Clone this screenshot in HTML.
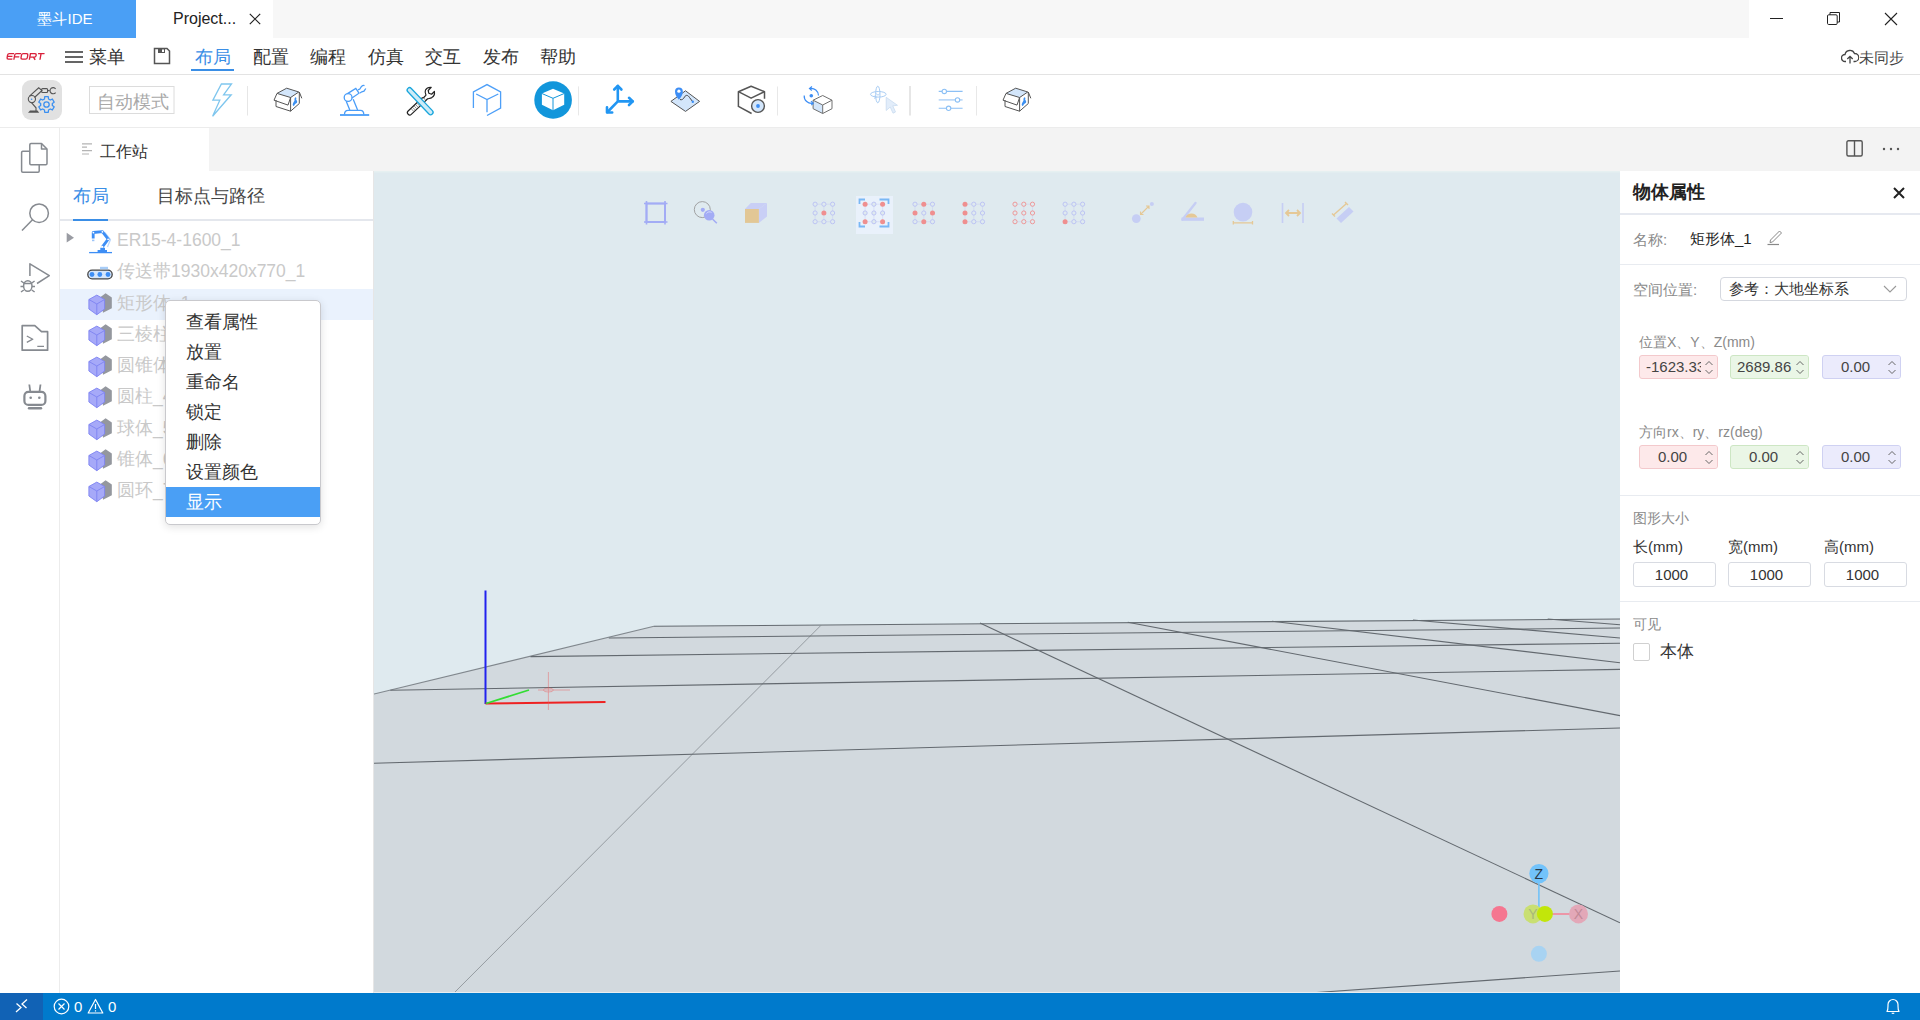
<!DOCTYPE html>
<html><head><meta charset="utf-8">
<style>
*{box-sizing:border-box;margin:0;padding:0}
html,body{width:1920px;height:1020px;overflow:hidden;background:#fff;font-family:"Liberation Sans",sans-serif;color:#333}
.abs{position:absolute}
#title{left:0;top:0;width:1920px;height:38px;background:#f7f7f7}
#tab1{left:0;top:0;width:136px;height:38px;background:#4a9ff5;color:#fff;font-size:15px;line-height:38px;text-align:center}
#tab2{left:136px;top:0;width:137px;height:38px;background:#fff;color:#222;font-size:15px;line-height:38px}
#winc{left:1749px;top:0;width:171px;height:38px;background:#fff}
#menubar{left:0;top:38px;width:1920px;height:37px;background:#fff;border-bottom:1px solid #e3e3e3}
.mi{position:absolute;top:1px;font-size:18px;line-height:37px;color:#333}
#toolbar{left:0;top:75px;width:1920px;height:53px;background:#fff;border-bottom:1px solid #ececec}
#act{left:0;top:128px;width:60px;height:865px;background:#fff;border-right:1px solid #ececec}
#tabhdr{left:60px;top:128px;width:1860px;height:43px;background:#f3f3f3}
#wtab{left:60px;top:128px;width:149px;height:43px;background:#fff}
#lpanel{left:60px;top:171px;width:314px;height:822px;background:#fff}
#view{left:374px;top:171px;width:1246px;height:822px;background:#dfeaef;overflow:hidden}
#rpanel{left:1620px;top:171px;width:300px;height:822px;background:#fff}
#status{left:0;top:993px;width:1920px;height:27px;background:#007acc}
.tree{font-size:17.5px;line-height:22px;color:#c9c9c9;white-space:nowrap}
.ci{position:absolute;left:20px;font-size:18px;line-height:22px;color:#333}
#status svg{position:absolute}
.rl{position:absolute;font-size:15px;line-height:20px;color:#8a8a8a;white-space:nowrap}
.sz{position:absolute;top:391px;width:83px;height:25px;border:1px solid #d8dbe2;border-radius:3px;font-size:15px;line-height:23px;text-align:center;color:#333;padding-right:6px}
</style></head><body>
<div id="title" class="abs"></div>
<div id="tab1" class="abs" style="padding-right:6px">墨斗IDE</div>
<div id="tab2" class="abs"><span style="position:absolute;left:37px;font-size:16px">Project...</span><svg style="position:absolute;left:113px;top:13px" width="12" height="12" viewBox="0 0 12 12"><path d="M0.8 0.8L11.2 11.2M11.2 0.8L0.8 11.2" stroke="#222" stroke-width="1.2"/></svg></div>
<div id="winc" class="abs">
<div class="abs" style="left:21px;top:18px;width:13px;height:1px;background:#222"></div>
<svg class="abs" style="left:77px;top:11px" width="15" height="15" viewBox="0 0 15 15"><rect x="1.5" y="3.8" width="9.7" height="9.7" rx="1.2" fill="none" stroke="#222" stroke-width="1"/><path d="M4 3.8V1.5H13.5V11H11.2" fill="none" stroke="#222" stroke-width="1"/></svg>
<svg class="abs" style="left:135px;top:12px" width="14" height="14" viewBox="0 0 14 14"><path d="M1 1L13 13M13 1L1 13" stroke="#222" stroke-width="1.1"/></svg>
</div>
<div id="menubar" class="abs">
<svg class="abs" style="left:0;top:0" width="50" height="30" viewBox="0 38 50 30"><g transform="translate(9.9,0) skewX(-10)" fill="none" stroke="#d9203a" stroke-width="1.35" stroke-linecap="butt">
<path d="M13.6 53.65H8.9C8 53.65 7.4 54.2 7.4 55.1V57.7C7.4 58.6 8 59.15 8.9 59.15H12.9M7.4 56.4H12.5"/>
<path d="M20.6 53.65H16C15.1 53.65 14.5 54.2 14.5 55.1V59.8M14.5 56.9H19.4"/>
<path d="M22.8 53.65H26.1C27 53.65 27.6 54.2 27.6 55.1V57.7C27.6 58.6 27 59.15 26.1 59.15H22.8C21.9 59.15 21.3 58.6 21.3 57.7V55.1C21.3 54.2 21.9 53.65 22.8 53.65Z"/>
<path d="M30 59.8V53.65H34.5C35.4 53.65 36 54.2 36 55.1V55.7C36 56.6 35.4 57.1 34.5 57.1H30.7M33.7 57.1L35.8 59.8"/>
<path d="M37.6 53.65H44.1M40.6 53.65V59.8"/>
</g></svg>
<svg class="abs" style="left:64px;top:12px" width="20" height="14"><path d="M1 2H19M1 7H19M1 12H19" stroke="#333" stroke-width="1.6"/></svg>
<span class="mi" style="left:89px">菜单</span>
<svg class="abs" style="left:153px;top:9px" width="18" height="18" viewBox="0 0 18 18"><path d="M2 1.5H14L16.5 4V16.5H1.5V1.5Z" fill="none" stroke="#555" stroke-width="1.5"/><rect x="5" y="2" width="7" height="4" fill="#555"/><rect x="9" y="2.5" width="2" height="2.5" fill="#fff"/></svg>
<span class="mi" style="left:195px;color:#3a8ee6">布局</span>
<div class="abs" style="left:191px;top:31px;width:43px;height:2px;background:#3a8ee6"></div>
<span class="mi" style="left:253px">配置</span>
<span class="mi" style="left:310px">编程</span>
<span class="mi" style="left:368px">仿真</span>
<span class="mi" style="left:425px">交互</span>
<span class="mi" style="left:483px">发布</span>
<span class="mi" style="left:540px">帮助</span>
<svg class="abs" style="left:1841px;top:11px" width="18" height="16" viewBox="0 0 18 16"><path d="M5 12.5H4A3.5 3.5 0 0 1 4 5.5A5 5 0 0 1 13.5 4.5A3.5 3.5 0 0 1 14 12.5H12.5" fill="none" stroke="#444" stroke-width="1.3"/><path d="M9 14.5V7.5M6.3 10L9 7.3L11.7 10" fill="none" stroke="#444" stroke-width="1.3"/></svg>
<span class="mi" style="left:1859px;font-size:15px;color:#444">未同步</span>
</div>
<div id="toolbar" class="abs"></div>
<svg class="abs" style="left:0;top:0" width="1100" height="128" viewBox="0 0 1100 128">
<rect x="22" y="80" width="40" height="40" rx="9" fill="#e1e1e1"/>
<g fill="none" stroke="#555" stroke-width="1.1">
<circle cx="31.9" cy="99.1" r="3.6"/><circle cx="31.6" cy="99.3" r="0.8" fill="#3b8ff0" stroke="none"/>
<path d="M29.5 96.2L38.7 87.8L42 90.5L34.5 97.5"/>
<rect x="41.6" y="88.6" width="6" height="3.9" rx="1"/>
<path d="M55.6 88.8A3.1 3.1 0 1 0 55.6 92.6"/>
<path d="M47.6 90.6H49.7"/>
<path d="M31.5 102.6L36 107.8V111"/>
</g>
<path d="M28 112.7L30 110.6H37.5L39.2 112.7Z" fill="#555"/>
<g fill="none" stroke="#3b8ff0" stroke-width="1.3">
<path d="M44.70 96.71L48.30 96.71L48.52 98.96L50.29 99.98L52.35 99.04L54.15 102.16L52.31 103.48L52.31 105.52L54.15 106.84L52.35 109.96L50.29 109.02L48.52 110.04L48.30 112.29L44.70 112.29L44.48 110.04L42.71 109.02L40.65 109.96L38.85 106.84L40.69 105.52L40.69 103.48L38.85 102.16L40.65 99.04L42.71 99.98L44.48 98.96Z" stroke-linejoin="round"/>
<circle cx="46.5" cy="104.5" r="2.7"/>
</g>
<rect x="89.5" y="86.5" width="84.5" height="27" fill="none" stroke="#dcdcdc" stroke-width="1"/>
<text x="97.2" y="108.3" font-size="17.9" fill="#a9a9a9" font-family="Liberation Sans, sans-serif">自动模式</text>
<path d="M221.4 84H231.5L223.6 94.8H231.2L212.6 116.2L219.8 100.2H212.9Z" fill="none" stroke="#7fc6ee" stroke-width="1.3" stroke-linejoin="miter"/>
<rect x="247" y="86" width="1" height="29.5" fill="#e6e6e6"/>
<g id="box1">
<path d="M277 93.4L286.7 88.2L298.8 92L290.6 97.5Z" fill="#d3e6fb"/>
<path d="M277 93.4L286.7 88.2L298.8 92L290.6 97.5ZM277 93.4L274 100.2L288 105.1L290.6 97.5M276 100V106.5L290.6 111.2V97.5M290.6 111.2L299.3 103.5V92L301.8 98.3" fill="none" stroke="#555" stroke-width="1" stroke-linejoin="round"/>
<path d="M295.5 97.3C296.6 97.5 296.5 99 296.1 100C297.4 100.3 297.5 102.5 296.6 103.1C295.7 103.9 294.7 104.3 294.1 105.8C293.1 106.3 292.5 105.3 292.8 104C293.2 102.5 294.2 101.6 294.5 100.6C294.4 99.2 294.5 97.6 295.5 97.3Z" fill="#3b8ff0"/>
</g>
<g fill="none" stroke="#4a9df8" stroke-width="1.3">
<path d="M340 115H369.2" stroke-width="1.8"/>
<path d="M344.5 114.5C344.5 112 345.5 110.3 348 110.3H360.5C363 110.3 363.8 112 363.8 114.5"/>
<path d="M346.2 101.2L349.8 110M353.2 99.3L357.6 110"/>
<circle cx="348.1" cy="97.5" r="3.9"/>
<path d="M347.5 93.6L355.8 88.4L359 93.2L352 98"/>
<path d="M358 89.8L359.8 89L361.5 86.5C362.5 85.5 363.5 85.2 364.5 85.6M360 93L361.8 91.8L364 91.2L365.8 88.5"/>
</g>
<g transform="rotate(-43 416.5 106.3)"><rect x="405" y="104" width="23" height="4.6" rx="2.2" fill="#fff" stroke="#222" stroke-width="1.2"/><path d="M411 104.6V108M413 104.6V108M415 104.6V108M417 104.6V108M419 104.6V108" stroke="#555" stroke-width="0.6"/></g>
<path d="M423.8 97.5L426 95.2C425.3 93.5 424.6 91.6 425.5 90C426.6 88 428.8 87.2 431.2 87.4L428.2 90.5L428.8 93.2L431.6 94.2L434.4 91.5C434.8 94 434 96.3 431.8 97.6C430.3 98.4 428.8 98.4 427.6 98.8L425.8 100.5" fill="#fff" stroke="#222" stroke-width="1.2" stroke-linejoin="round"/>
<g transform="rotate(46.5 420.1 101.2)"><rect x="402.4" y="98.8" width="35.4" height="4.8" rx="2.4" fill="#cdebf7" stroke="#1aa6dc" stroke-width="1.3"/></g>
<g fill="none" stroke="#4d9ff8" stroke-width="1.3">
<path d="M473.4 108V92L487 84.6L500.6 92V108L487 115.5"/>
<path d="M476.2 94L487 99.6L498.3 94M487 99.6V112.2"/>
</g>
<circle cx="553.1" cy="100" r="18.8" fill="#1296db"/>
<path d="M553 88.8L564.2 93.5V104.7L553 110.3L541.9 104.7V93.5Z" fill="#fff"/>
<path d="M541.9 93.5L553 98.3L564.2 93.5M553 98.3V110.3" fill="none" stroke="#1296db" stroke-width="1"/>
<rect x="578" y="86.4" width="1" height="29" fill="#e8e8e8"/>
<g fill="none" stroke="#2196f3" stroke-width="2.6" stroke-linecap="round" stroke-linejoin="round">
<path d="M617.8 101.4V86M617.8 101.4H632.5M617.8 101.4L607.5 112"/>
<path d="M614.2 89.5L617.8 85.8L621.4 89.5M629 97.8L632.8 101.4L629 105M607 107.2L607 112.5L612.2 112.5"/>
</g>
<path d="M670.9 101.4L685.5 90.8L699.6 101.4L685.5 111.4Z" fill="#d3e6fb" stroke="#555" stroke-width="1"/>
<path d="M680 99.6C682 100.2 683.5 99 684.5 97C686 94.5 688 95 689.5 97.5L692.8 101.8" fill="none" stroke="#444" stroke-width="1"/>
<circle cx="692.8" cy="101.8" r="1.2" fill="#3d8ef5"/>
<path d="M678.9 99.8C676.2 96.5 675 94.3 675 91.3A3.9 3.9 0 0 1 682.8 91.3C682.8 94.3 681.6 96.5 678.9 99.8Z" fill="#3d8ef5"/>
<circle cx="678.9" cy="91.2" r="1.6" fill="#fff"/>
<g fill="none" stroke="#555" stroke-width="1.5" stroke-linejoin="round">
<path d="M751.6 113.5L738.4 106.4V91.7L751.1 86.2L764.5 91.7V98.7"/>
<path d="M738.4 91.7L751.1 98.2L764.5 91.7"/>
</g>
<circle cx="758" cy="106" r="6.4" fill="#d3e6fb" stroke="#555" stroke-width="1.4"/>
<circle cx="758" cy="106" r="1.9" fill="#3d8ef5"/>
<rect x="777" y="86.5" width="1" height="29" fill="#e8e8e8"/>
<path d="M813.1 100.2L822.7 105V113.5L813.1 108.7Z" fill="#d3e6fb"/>
<g fill="none" stroke="#707070" stroke-width="1">
<path d="M813.1 100.2L822.7 95.5L832 100.2L822.7 105ZM813.1 100.2V108.7L822.7 113.5L832 108.7V100.2M822.7 105V113.5"/>
</g>
<circle cx="811.3" cy="95.7" r="1.8" fill="#3d8ef5"/>
<g fill="none" stroke="#3d8ef5" stroke-width="1.2">
<path d="M810 88.5A7.3 7.3 0 0 1 818.5 95.5"/>
<path d="M804.2 95.5A7.3 7.3 0 0 0 813 103.2"/>
<path d="M812 86.5L809.5 88.5L811.8 90.5M811 101.2L813.2 103.2L811.3 105.2"/>
</g>
<g fill="none" stroke="#a9cdf4" stroke-width="1">
<ellipse cx="878.3" cy="94.3" rx="7.8" ry="2.8"/>
<ellipse cx="877.8" cy="94.5" rx="2.2" ry="8.3"/><path d="M876 93.6L878 95.2L880 93.6M874 96L876.5 97.2L874 98.4" stroke-width="0.9"/>
</g>
<path d="M886.2 97.3L897.5 105.3L892.8 105.8L895.5 112L893 113.2L890.2 107L886.2 110.5Z" fill="#e2edfa" stroke="#c9dcf0" stroke-width="0.8"/>
<rect x="909" y="86" width="2" height="29.5" fill="#e6e6e6"/>
<g fill="none" stroke="#8cc0f5" stroke-width="1.1">
<path d="M938.7 91.4H962.6M938.7 108.3H962.6"/><path d="M938.7 99.9H962.6" stroke="#b3d4f7" stroke-width="1.5"/>
</g>
<g fill="#fff" stroke="#8cc0f5" stroke-width="1.1">
<circle cx="944.3" cy="91.4" r="2.2"/><circle cx="957.5" cy="99.9" r="2.2"/><circle cx="948.6" cy="108.3" r="2.2"/>
</g>
<rect x="976" y="86" width="1" height="29.5" fill="#e8e8e8"/>
<use href="#box1" x="729" y="0"/>
</svg>
<div id="act" class="abs"></div>
<svg class="abs" style="left:0;top:128px" width="59" height="300" viewBox="0 128 59 300">
<g fill="none" stroke="#868a90" stroke-width="1.5" stroke-linejoin="round">
<path d="M29.8 151.2H22.8Q21.6 151.2 21.6 152.4V171Q21.6 172.2 22.8 172.2H38Q39.2 172.2 39.2 171V164.7"/>
<path d="M31 143.5H41.5L47 149V163.5Q47 164.7 45.8 164.7H31Q29.8 164.7 29.8 163.5V144.7Q29.8 143.5 31 143.5Z"/>
<path d="M41.5 143.5V149H47"/>
<circle cx="39.1" cy="213.2" r="9.3"/>
<path d="M32.5 219.8L22 230.5"/>
<path d="M29.9 276V263.8L49.3 275.7L37 283.5"/>
<ellipse cx="27.8" cy="286" rx="4.2" ry="5.3"/>
<path d="M23.6 283.5H32M21 281L23.8 283M34.6 281L31.8 283M20.5 286.5H23.6M32 286.5H35M21 292L23.8 290M34.6 292L31.8 290"/>
<path d="M22.2 350.2V325.7H34.8L41.5 331.7H47.6V350.2Z" stroke-width="1.7"/>
<path d="M26.8 336L32.8 339.2L26.8 342.3M37.3 346.3H44" stroke-width="1.3"/>
</g>
<g fill="none" stroke="#868a90">
<rect x="24.4" y="391.9" width="21" height="13" rx="4" stroke-width="2.2"/>
<path d="M30.2 391L29.3 384.5M39.6 391L40.5 384.5" stroke-width="1.8"/>
<path d="M29 408.2H41" stroke-width="2.4" stroke-linecap="round"/>
</g>
<g fill="#868a90"><circle cx="30.7" cy="397.8" r="1.3"/><circle cx="39.3" cy="397.8" r="1.3"/></g>
</svg>
<div id="tabhdr" class="abs"></div>
<div id="wtab" class="abs">
<svg class="abs" style="left:21px;top:15px" width="12" height="12" viewBox="0 0 12 12"><path d="M1 0.8H11M1 4.2H6M1 7.6H11M1 11H8" stroke="#b4b4b4" stroke-width="1.2"/></svg>
<span class="abs" style="left:40px;top:14px;font-size:16px;line-height:20px;color:#333">工作站</span>
</div>
<svg class="abs" style="left:1844px;top:140px" width="20" height="18" viewBox="0 0 20 18"><rect x="2.9" y="0.8" width="15.3" height="15.2" rx="1.5" fill="none" stroke="#555" stroke-width="1.4"/><path d="M10.5 0.8V16" stroke="#555" stroke-width="1.4"/></svg>
<svg class="abs" style="left:1882px;top:147px" width="18" height="4"><circle cx="2" cy="2" r="1.2" fill="#555"/><circle cx="9" cy="2" r="1.2" fill="#555"/><circle cx="16" cy="2" r="1.2" fill="#555"/></svg>
<div id="lpanel" class="abs">
<span class="abs" style="left:13px;top:14px;font-size:18px;line-height:22px;color:#3a8ee6">布局</span>
<span class="abs" style="left:97px;top:14px;font-size:18px;line-height:22px;color:#444">目标点与路径</span>
<div class="abs" style="left:0;top:48px;width:313px;height:2px;background:#e4e7ed"></div>
<div class="abs" style="left:13px;top:48px;width:35px;height:2px;background:#3a8ee6"></div>
</div>
<div class="abs" style="left:60px;top:289px;width:313px;height:31px;background:#eaf2fd"></div>
<svg class="abs" style="left:66px;top:232px" width="9" height="11"><path d="M0.7 0.8L8 5.7L0.7 10.6Z" fill="#9a9ca3"/></svg>
<svg class="abs" style="left:85px;top:226px" width="30" height="30" viewBox="85 226 30 30">
<path d="M105 232.5L110.5 239.5L107.5 247" fill="none" stroke="#b9d6fb" stroke-width="1.2"/>
<path d="M89.1 252.6H112" stroke="#3d8ef5" stroke-width="1.3"/>
<path d="M97.6 252.6V250.1H100.3V247.8H105V250.1H107V252.6Z" fill="#3d8ef5"/>
<path d="M102.4 246.8L108.2 239.2L102.4 231.6L93.2 232.5V238.6" fill="none" stroke="#3d8ef5" stroke-width="2.8" stroke-linejoin="round"/>
<rect x="92" y="239.6" width="2.4" height="1.6" fill="#9cc4f8"/>
<g fill="#fff"><circle cx="93.4" cy="232.6" r="0.9"/><circle cx="102.4" cy="231.8" r="0.9"/><circle cx="108.1" cy="239.3" r="0.9"/><circle cx="102.4" cy="246.6" r="0.9"/></g>
</svg>
<span class="abs tree" style="left:117px;top:229px">ER15-4-1600_1</span>
<svg class="abs" style="left:87px;top:265px" width="26" height="15" viewBox="0 0 26 15"><rect x="0.8" y="5.2" width="24.4" height="8.6" rx="4.3" fill="#d5e6fb" stroke="#444" stroke-width="1.3"/><circle cx="5" cy="9.5" r="2.4" fill="#3d8ef5"/><circle cx="12.8" cy="9.5" r="2.4" fill="#3d8ef5"/><circle cx="21" cy="9.5" r="2.4" fill="#3d8ef5"/><rect x="13" y="1.8" width="8" height="2.5" fill="#a8cdf7"/></svg>
<span class="abs tree" style="left:117px;top:260px">传送带1930x420x770_1</span>
<svg class="abs" style="left:88px;top:292px" width="26" height="24" viewBox="0 0 26 24"><path d="M12.2 5.2L17.6 1.2L23.8 5.5V16.3L15 20.7Z" fill="#94979e"/><path d="M8.8 3.1L16.6 7.5V17L8.8 22.7L0.9 17V7.5Z" fill="#a6a9f8" stroke="#7e83f2" stroke-width="0.9"/><path d="M0.9 7.5L8.8 12L16.6 7.5M8.8 12V22.7" fill="none" stroke="#7e83f2" stroke-width="0.9"/></svg>
<span class="abs tree" style="left:117px;top:292px">矩形体_1</span>
<svg class="abs" style="left:88px;top:323px" width="26" height="24" viewBox="0 0 26 24"><path d="M12.2 5.2L17.6 1.2L23.8 5.5V16.3L15 20.7Z" fill="#94979e"/><path d="M8.8 3.1L16.6 7.5V17L8.8 22.7L0.9 17V7.5Z" fill="#a6a9f8" stroke="#7e83f2" stroke-width="0.9"/><path d="M0.9 7.5L8.8 12L16.6 7.5M8.8 12V22.7" fill="none" stroke="#7e83f2" stroke-width="0.9"/></svg><span class="abs tree" style="left:117px;top:323px">三棱柱_2</span>
<svg class="abs" style="left:88px;top:354px" width="26" height="24" viewBox="0 0 26 24"><path d="M12.2 5.2L17.6 1.2L23.8 5.5V16.3L15 20.7Z" fill="#94979e"/><path d="M8.8 3.1L16.6 7.5V17L8.8 22.7L0.9 17V7.5Z" fill="#a6a9f8" stroke="#7e83f2" stroke-width="0.9"/><path d="M0.9 7.5L8.8 12L16.6 7.5M8.8 12V22.7" fill="none" stroke="#7e83f2" stroke-width="0.9"/></svg><span class="abs tree" style="left:117px;top:354px">圆锥体_3</span>
<svg class="abs" style="left:88px;top:385px" width="26" height="24" viewBox="0 0 26 24"><path d="M12.2 5.2L17.6 1.2L23.8 5.5V16.3L15 20.7Z" fill="#94979e"/><path d="M8.8 3.1L16.6 7.5V17L8.8 22.7L0.9 17V7.5Z" fill="#a6a9f8" stroke="#7e83f2" stroke-width="0.9"/><path d="M0.9 7.5L8.8 12L16.6 7.5M8.8 12V22.7" fill="none" stroke="#7e83f2" stroke-width="0.9"/></svg><span class="abs tree" style="left:117px;top:385px">圆柱_4</span>
<svg class="abs" style="left:88px;top:417px" width="26" height="24" viewBox="0 0 26 24"><path d="M12.2 5.2L17.6 1.2L23.8 5.5V16.3L15 20.7Z" fill="#94979e"/><path d="M8.8 3.1L16.6 7.5V17L8.8 22.7L0.9 17V7.5Z" fill="#a6a9f8" stroke="#7e83f2" stroke-width="0.9"/><path d="M0.9 7.5L8.8 12L16.6 7.5M8.8 12V22.7" fill="none" stroke="#7e83f2" stroke-width="0.9"/></svg><span class="abs tree" style="left:117px;top:417px">球体_5</span>
<svg class="abs" style="left:88px;top:448px" width="26" height="24" viewBox="0 0 26 24"><path d="M12.2 5.2L17.6 1.2L23.8 5.5V16.3L15 20.7Z" fill="#94979e"/><path d="M8.8 3.1L16.6 7.5V17L8.8 22.7L0.9 17V7.5Z" fill="#a6a9f8" stroke="#7e83f2" stroke-width="0.9"/><path d="M0.9 7.5L8.8 12L16.6 7.5M8.8 12V22.7" fill="none" stroke="#7e83f2" stroke-width="0.9"/></svg><span class="abs tree" style="left:117px;top:448px">锥体_6</span>
<svg class="abs" style="left:88px;top:479px" width="26" height="24" viewBox="0 0 26 24"><path d="M12.2 5.2L17.6 1.2L23.8 5.5V16.3L15 20.7Z" fill="#94979e"/><path d="M8.8 3.1L16.6 7.5V17L8.8 22.7L0.9 17V7.5Z" fill="#a6a9f8" stroke="#7e83f2" stroke-width="0.9"/><path d="M0.9 7.5L8.8 12L16.6 7.5M8.8 12V22.7" fill="none" stroke="#7e83f2" stroke-width="0.9"/></svg><span class="abs tree" style="left:117px;top:479px">圆环_7</span>

<div class="abs" id="ctx" style="left:165px;top:300px;width:156px;height:225px;background:#fff;border:1px solid #c9c9cd;border-radius:5px;box-shadow:0 2px 8px rgba(0,0,0,0.12)">
<div class="abs" style="left:0;top:186px;width:154px;height:30px;background:#4a9ff5"></div>
<div class="ci" style="top:10px">查看属性</div>
<div class="ci" style="top:40px">放置</div>
<div class="ci" style="top:70px">重命名</div>
<div class="ci" style="top:100px">锁定</div>
<div class="ci" style="top:130px">删除</div>
<div class="ci" style="top:160px">设置颜色</div>
<div class="ci" style="top:190px;color:#fff">显示</div>
</div>
<div id="view" class="abs"></div>
<svg class="abs" style="left:374px;top:171px" width="1246" height="822" viewBox="374 171 1246 822">
<rect x="374" y="171" width="1246" height="822" fill="#dfeaef"/><rect x="374" y="171" width="1246" height="1.5" fill="#e6f0f1"/>
<path d="M374 694L654 626.3L1620 619V993H374Z" fill="#d2d9de"/>
<g stroke="#50565c" stroke-width="1.1" fill="none" opacity="0.85">
<path d="M374 694L654 626.3" opacity="0.75"/><path d="M654 626.3L1620 619"/>
<path d="M608.8 638L1620 628"/>
<path d="M530.5 656.6L1620 643.2"/>
<path d="M390.3 690.2L1620 669.4"/>
<path d="M374 763.2L1620 728"/>
<path d="M1309.7 993L1620 971"/>
<path d="M820.7 625.6L454 993" stroke-width="0.9" opacity="0.6"/>
<path d="M980 623L1620 922.8"/>
<path d="M1127.8 622.3L1620 715.6"/>
<path d="M1272 621.3L1620 662.8"/>
<path d="M1413 620L1620 638"/>
<path d="M1547.7 619L1620 624.8"/>
</g>
<path d="M485.5 590.5V704" stroke="#2222ee" stroke-width="2"/>
<path d="M485.5 703.5L605.5 702" stroke="#ee2222" stroke-width="2"/>
<path d="M486 703.5L529 690" stroke="#33dd33" stroke-width="1.8"/>
<g stroke="#ee5555" stroke-width="0.7" opacity="0.6"><path d="M548.4 672V710M538 690H570"/><ellipse cx="548.4" cy="690" rx="5" ry="2" fill="none"/></g>
<g stroke="#a3acf5" stroke-width="2" fill="none"><rect x="646.5" y="203.5" width="18.5" height="18.5"/><path d="M646.5 201V224.5M665 201V224.5M644 203.5H667.5M644 222H667.5" stroke-width="1.6"/></g><circle cx="702.3" cy="209.6" r="8" fill="none" stroke="#9a9a9a" stroke-width="0.9"/><circle cx="702.8" cy="209.8" r="2.1" fill="#a3acf5"/><circle cx="709.2" cy="215.3" r="5.3" fill="#a3acf5"/><path d="M712.5 219L716.8 223.2" stroke="#a3acf5" stroke-width="1.6"/><path d="M706.5 213.5A3.5 3.5 0 0 1 711.5 212.5" stroke="#dfe4fb" stroke-width="0.8" fill="none"/><path d="M745 209L750.8 203H767L758.9 209Z" fill="#c9cff6"/><path d="M758.9 209L767 203V216.4L758.9 222.9Z" fill="#c9cff6"/><rect x="745" y="209" width="13.9" height="13.9" fill="#e2c795"/><g stroke="#b9c0f4" stroke-width="0.7" fill="none" opacity="0.45"><path d="M815.1 204.2V221.7"/><path d="M823.9 204.2V221.7"/><path d="M832.6 204.2V221.7"/><path d="M815.1 204.2H832.6M815.1 221.7H832.6"/></g><circle cx="815.1" cy="204.2" r="2.1" fill="#dfeaef" stroke="#b9c0f4" stroke-width="0.9"/><circle cx="823.9" cy="204.2" r="2.1" fill="#dfeaef" stroke="#b9c0f4" stroke-width="0.9"/><circle cx="832.6" cy="204.2" r="2.1" fill="#dfeaef" stroke="#b9c0f4" stroke-width="0.9"/><circle cx="815.1" cy="213.0" r="2.1" fill="#dfeaef" stroke="#b9c0f4" stroke-width="0.9"/><circle cx="823.9" cy="213.0" r="2.5" fill="#ef8f8f"/><circle cx="832.6" cy="213.0" r="2.1" fill="#dfeaef" stroke="#b9c0f4" stroke-width="0.9"/><circle cx="815.1" cy="221.7" r="2.1" fill="#dfeaef" stroke="#b9c0f4" stroke-width="0.9"/><circle cx="823.9" cy="221.7" r="2.1" fill="#dfeaef" stroke="#b9c0f4" stroke-width="0.9"/><circle cx="832.6" cy="221.7" r="2.1" fill="#dfeaef" stroke="#b9c0f4" stroke-width="0.9"/><rect x="856" y="196" width="37" height="38" fill="#e9f1fb"/><g stroke="#7ab8f5" stroke-width="1.8" fill="none"><path d="M859.5 204V199.5H865M879.5 199.5H888.5V204M859.5 222V226.5H865M879.5 226.5H888.5V222"/></g><g stroke="#b9c0f4" stroke-width="0.7" fill="none" opacity="0.45"><path d="M865.1 204.2V221.7"/><path d="M873.9 204.2V221.7"/><path d="M882.6 204.2V221.7"/><path d="M865.1 204.2H882.6M865.1 221.7H882.6"/></g><circle cx="865.1" cy="204.2" r="2.5" fill="#ef8f8f"/><circle cx="873.9" cy="204.2" r="2.1" fill="#dfeaef" stroke="#b9c0f4" stroke-width="0.9"/><circle cx="882.6" cy="204.2" r="2.5" fill="#ef8f8f"/><circle cx="865.1" cy="213.0" r="2.1" fill="#dfeaef" stroke="#b9c0f4" stroke-width="0.9"/><circle cx="873.9" cy="213.0" r="2.1" fill="#dfeaef" stroke="#b9c0f4" stroke-width="0.9"/><circle cx="882.6" cy="213.0" r="2.1" fill="#dfeaef" stroke="#b9c0f4" stroke-width="0.9"/><circle cx="865.1" cy="221.7" r="2.5" fill="#ef8f8f"/><circle cx="873.9" cy="221.7" r="2.1" fill="#dfeaef" stroke="#b9c0f4" stroke-width="0.9"/><circle cx="882.6" cy="221.7" r="2.5" fill="#ef8f8f"/><g stroke="#b9c0f4" stroke-width="0.7" fill="none" opacity="0.45"><path d="M915.0 204.2V221.7"/><path d="M923.8 204.2V221.7"/><path d="M932.5 204.2V221.7"/><path d="M915.0 204.2H932.5M915.0 221.7H932.5"/></g><circle cx="915.0" cy="204.2" r="2.1" fill="#dfeaef" stroke="#b9c0f4" stroke-width="0.9"/><circle cx="923.8" cy="204.2" r="2.5" fill="#ef8f8f"/><circle cx="932.5" cy="204.2" r="2.1" fill="#dfeaef" stroke="#b9c0f4" stroke-width="0.9"/><circle cx="915.0" cy="213.0" r="2.5" fill="#ef8f8f"/><circle cx="923.8" cy="213.0" r="2.1" fill="#dfeaef" stroke="#b9c0f4" stroke-width="0.9"/><circle cx="932.5" cy="213.0" r="2.5" fill="#ef8f8f"/><circle cx="915.0" cy="221.7" r="2.1" fill="#dfeaef" stroke="#b9c0f4" stroke-width="0.9"/><circle cx="923.8" cy="221.7" r="2.5" fill="#ef8f8f"/><circle cx="932.5" cy="221.7" r="2.1" fill="#dfeaef" stroke="#b9c0f4" stroke-width="0.9"/><g stroke="#b9c0f4" stroke-width="0.7" fill="none" opacity="0.45"><path d="M965.0 204.2V221.7"/><path d="M973.8 204.2V221.7"/><path d="M982.5 204.2V221.7"/><path d="M965.0 204.2H982.5M965.0 221.7H982.5"/></g><circle cx="965.0" cy="204.2" r="2.5" fill="#ef8f8f"/><circle cx="973.8" cy="204.2" r="2.1" fill="#dfeaef" stroke="#b9c0f4" stroke-width="0.9"/><circle cx="982.5" cy="204.2" r="2.1" fill="#dfeaef" stroke="#b9c0f4" stroke-width="0.9"/><circle cx="965.0" cy="213.0" r="2.5" fill="#ef8f8f"/><circle cx="973.8" cy="213.0" r="2.1" fill="#dfeaef" stroke="#b9c0f4" stroke-width="0.9"/><circle cx="982.5" cy="213.0" r="2.1" fill="#dfeaef" stroke="#b9c0f4" stroke-width="0.9"/><circle cx="965.0" cy="221.7" r="2.5" fill="#ef8f8f"/><circle cx="973.8" cy="221.7" r="2.1" fill="#dfeaef" stroke="#b9c0f4" stroke-width="0.9"/><circle cx="982.5" cy="221.7" r="2.1" fill="#dfeaef" stroke="#b9c0f4" stroke-width="0.9"/><g stroke="#b9c0f4" stroke-width="0.7" fill="none" opacity="0.45"><path d="M1015.0 204.2V221.7"/><path d="M1023.8 204.2V221.7"/><path d="M1032.5 204.2V221.7"/><path d="M1015.0 204.2H1032.5M1015.0 221.7H1032.5"/></g><circle cx="1015.0" cy="204.2" r="2.1" fill="#dfeaef" stroke="#ef8f8f" stroke-width="0.9"/><circle cx="1023.8" cy="204.2" r="2.1" fill="#dfeaef" stroke="#ef8f8f" stroke-width="0.9"/><circle cx="1032.5" cy="204.2" r="2.1" fill="#dfeaef" stroke="#ef8f8f" stroke-width="0.9"/><circle cx="1015.0" cy="213.0" r="2.1" fill="#dfeaef" stroke="#ef8f8f" stroke-width="0.9"/><circle cx="1023.8" cy="213.0" r="2.1" fill="#dfeaef" stroke="#ef8f8f" stroke-width="0.9"/><circle cx="1032.5" cy="213.0" r="2.1" fill="#dfeaef" stroke="#ef8f8f" stroke-width="0.9"/><circle cx="1015.0" cy="221.7" r="2.1" fill="#dfeaef" stroke="#ef8f8f" stroke-width="0.9"/><circle cx="1023.8" cy="221.7" r="2.1" fill="#dfeaef" stroke="#ef8f8f" stroke-width="0.9"/><circle cx="1032.5" cy="221.7" r="2.1" fill="#dfeaef" stroke="#ef8f8f" stroke-width="0.9"/><g stroke="#b9c0f4" stroke-width="0.7" fill="none" opacity="0.45"><path d="M1065.1 204.2V221.7"/><path d="M1073.9 204.2V221.7"/><path d="M1082.6 204.2V221.7"/><path d="M1065.1 204.2H1082.6M1065.1 221.7H1082.6"/></g><circle cx="1065.1" cy="204.2" r="2.1" fill="#dfeaef" stroke="#b9c0f4" stroke-width="0.9"/><circle cx="1073.9" cy="204.2" r="2.1" fill="#dfeaef" stroke="#b9c0f4" stroke-width="0.9"/><circle cx="1082.6" cy="204.2" r="2.1" fill="#dfeaef" stroke="#b9c0f4" stroke-width="0.9"/><circle cx="1065.1" cy="213.0" r="2.1" fill="#dfeaef" stroke="#b9c0f4" stroke-width="0.9"/><circle cx="1073.9" cy="213.0" r="2.1" fill="#dfeaef" stroke="#b9c0f4" stroke-width="0.9"/><circle cx="1082.6" cy="213.0" r="2.1" fill="#dfeaef" stroke="#b9c0f4" stroke-width="0.9"/><circle cx="1065.1" cy="221.7" r="2.5" fill="#ef8f8f"/><circle cx="1073.9" cy="221.7" r="2.1" fill="#dfeaef" stroke="#b9c0f4" stroke-width="0.9"/><circle cx="1082.6" cy="221.7" r="2.1" fill="#dfeaef" stroke="#b9c0f4" stroke-width="0.9"/><circle cx="1136.3" cy="218.6" r="4.4" fill="#c6cef4"/><circle cx="1151.9" cy="203.9" r="2" fill="#c6cef4"/><path d="M1140.5 214.5L1149 206M1140.5 211.5V214.5H1143.5M1146 206H1149V209" stroke="#e5c896" stroke-width="1.1" fill="none"/><path d="M1182.5 219.5L1195.5 203" stroke="#c6cef4" stroke-width="2.4" stroke-linecap="round"/><rect x="1181.5" y="217.5" width="22.5" height="3.3" fill="#c6cef4"/><path d="M1185.5 217.5A6.5 6.5 0 0 1 1197.5 217.5Z" fill="#e5c896"/><circle cx="1243" cy="212.1" r="9.3" fill="#c6cef4"/><path d="M1233 222.8H1252.8M1233.3 221V224.5M1252.5 221V224.5" stroke="#e5c896" stroke-width="1.3"/><path d="M1282.5 203V223M1303 203V223" stroke="#c6cef4" stroke-width="1.6"/><path d="M1286 213H1300M1289 210L1286 213L1289 216M1297 210L1300 213L1297 216" stroke="#e5c896" stroke-width="1.8" fill="none"/><path d="M1333.5 215L1346.5 203.5M1332 213.5L1335 216.5M1345 202L1348 205" stroke="#e5c896" stroke-width="1.4"/><path d="M1336.5 218.5L1349 207L1353.5 211.5L1341 223Z" fill="#c6cef4"/>
<g>
<path d="M1538.9 873.6V913.9" stroke="#6cc0fa" stroke-width="1.5"/>
<path d="M1544.9 913.9H1578.5" stroke="#f47f95" stroke-width="1.5"/>
<circle cx="1538.9" cy="873.6" r="9.6" fill="#72c3fb"/>
<text x="1538.9" y="879" font-size="14" text-anchor="middle" fill="#2a3a4a" font-family="Liberation Sans, sans-serif">Z</text>
<circle cx="1499.4" cy="913.9" r="8" fill="#f57690"/>
<circle cx="1533" cy="913.9" r="9.5" fill="#c9df72"/>
<text x="1533" y="919" font-size="14" text-anchor="middle" fill="#a8b87a" font-family="Liberation Sans, sans-serif">Y</text>
<circle cx="1544.9" cy="913.9" r="8" fill="#c2e60a"/>
<circle cx="1578.5" cy="913.9" r="9.5" fill="#e3a8b8"/>
<text x="1578.5" y="919" font-size="14" text-anchor="middle" fill="#c28a98" font-family="Liberation Sans, sans-serif">X</text>
<circle cx="1538.9" cy="953.8" r="8" fill="#a8d3f2"/>
</g>
</svg>
<div class="abs" style="left:373px;top:171px;width:1px;height:822px;background:#e6e6e6"></div>
<div class="abs" style="left:374px;top:992px;width:1246px;height:1px;background:#e9eef1"></div>
<div id="rpanel" class="abs">
<span class="abs" style="left:13px;top:10px;font-size:18px;line-height:22px;font-weight:bold;color:#222">物体属性</span>
<svg class="abs" style="left:273px;top:16px" width="12" height="12" viewBox="0 0 12 12"><path d="M1 1L11 11M11 1L1 11" stroke="#222" stroke-width="2"/></svg>
<div class="abs" style="left:0;top:42px;width:300px;height:2px;background:#e6e9f0"></div>
<span class="rl" style="left:13px;top:59px">名称:</span>
<span class="abs" style="left:70px;top:58px;font-size:15px;line-height:20px;color:#222">矩形体_1</span>
<svg class="abs" style="left:1147px;top:57px" width="16" height="17" viewBox="0 0 16 17" style="position:absolute"></svg>
<div class="abs" style="left:0;top:93px;width:300px;height:1px;background:#e8ebf0"></div>
<span class="rl" style="left:13px;top:109px">空间位置:</span>
<div class="abs" style="left:100px;top:106px;width:187px;height:24px;border:1px solid #d5d8df;border-radius:4px"></div>
<span class="abs" style="left:109px;top:108px;font-size:15px;line-height:20px;color:#333">参考：大地坐标系</span>
<svg class="abs" style="left:263px;top:114px" width="14" height="8" viewBox="0 0 14 8"><path d="M1 1L7 7L13 1" fill="none" stroke="#999" stroke-width="1.1"/></svg>
<span class="rl" style="left:19px;top:161px;font-size:14px">位置X、Y、Z(mm)</span>
<span class="rl" style="left:19px;top:251px;font-size:14px">方向rx、ry、rz(deg)</span>
<div class="abs" style="left:0;top:324px;width:300px;height:1px;background:#e8ebf0"></div>
<span class="rl" style="left:13px;top:337px;font-size:14px">图形大小</span>
<span class="abs" style="left:13px;top:366px;font-size:15px;line-height:20px;color:#333">长(mm)</span>
<span class="abs" style="left:108px;top:366px;font-size:15px;line-height:20px;color:#333">宽(mm)</span>
<span class="abs" style="left:204px;top:366px;font-size:15px;line-height:20px;color:#333">高(mm)</span>
<div class="sz" style="left:13px">1000</div>
<div class="sz" style="left:108px">1000</div>
<div class="sz" style="left:204px">1000</div>
<div class="abs" style="left:0;top:430px;width:300px;height:1px;background:#e8ebf0"></div>
<span class="rl" style="left:13px;top:443px;font-size:14px">可见</span>
<div class="abs" style="left:13px;top:472px;width:17px;height:18px;border:1px solid #d0d0d0;border-radius:2px;background:#fff"></div>
<span class="abs" style="left:40px;top:470px;font-size:17px;line-height:22px;color:#333">本体</span>
</div>
<svg class="abs" style="left:1766px;top:228px" width="18" height="18" viewBox="0 0 18 18"><path d="M4.5 12L13.5 3L15.5 5L6.5 14L4 14.5Z" fill="none" stroke="#888" stroke-width="1"/><path d="M1.5 16.5H13" stroke="#888" stroke-width="1.2"/></svg>
<div class="abs" style="left:1639px;top:355px;width:79px;height:24px;background:#fde9ea;border:1px solid #f3c9cc;border-radius:3px;overflow:hidden"><span class="abs" style="left:6px;top:1px;font-size:15px;line-height:20px;color:#444;white-space:nowrap">-1623.33</span><div class="abs" style="right:0;top:0;width:16px;height:22px;background:#fde9ea"></div><svg class="abs" style="right:3px;top:4px" width="10" height="15" viewBox="0 0 10 15"><path d="M1.5 5L5 1.5L8.5 5M1.5 10L5 13.5L8.5 10" fill="none" stroke="#666" stroke-width="1"/></svg></div>
<div class="abs" style="left:1730px;top:355px;width:79px;height:24px;background:#eaf6e6;border:1px solid #cde6c4;border-radius:3px;overflow:hidden"><span class="abs" style="left:6px;top:1px;font-size:15px;line-height:20px;color:#444;white-space:nowrap">2689.86</span><div class="abs" style="right:0;top:0;width:16px;height:22px;background:#eaf6e6"></div><svg class="abs" style="right:3px;top:4px" width="10" height="15" viewBox="0 0 10 15"><path d="M1.5 5L5 1.5L8.5 5M1.5 10L5 13.5L8.5 10" fill="none" stroke="#666" stroke-width="1"/></svg></div>
<div class="abs" style="left:1822px;top:355px;width:79px;height:24px;background:#ebebfc;border:1px solid #cfd1f2;border-radius:3px;overflow:hidden"><span class="abs" style="left:18px;top:1px;font-size:15px;line-height:20px;color:#444;white-space:nowrap">0.00</span><div class="abs" style="right:0;top:0;width:16px;height:22px;background:#ebebfc"></div><svg class="abs" style="right:3px;top:4px" width="10" height="15" viewBox="0 0 10 15"><path d="M1.5 5L5 1.5L8.5 5M1.5 10L5 13.5L8.5 10" fill="none" stroke="#666" stroke-width="1"/></svg></div>
<div class="abs" style="left:1639px;top:445px;width:79px;height:24px;background:#fde9ea;border:1px solid #f3c9cc;border-radius:3px;overflow:hidden"><span class="abs" style="left:18px;top:1px;font-size:15px;line-height:20px;color:#444;white-space:nowrap">0.00</span><div class="abs" style="right:0;top:0;width:16px;height:22px;background:#fde9ea"></div><svg class="abs" style="right:3px;top:4px" width="10" height="15" viewBox="0 0 10 15"><path d="M1.5 5L5 1.5L8.5 5M1.5 10L5 13.5L8.5 10" fill="none" stroke="#666" stroke-width="1"/></svg></div>
<div class="abs" style="left:1730px;top:445px;width:79px;height:24px;background:#eaf6e6;border:1px solid #cde6c4;border-radius:3px;overflow:hidden"><span class="abs" style="left:18px;top:1px;font-size:15px;line-height:20px;color:#444;white-space:nowrap">0.00</span><div class="abs" style="right:0;top:0;width:16px;height:22px;background:#eaf6e6"></div><svg class="abs" style="right:3px;top:4px" width="10" height="15" viewBox="0 0 10 15"><path d="M1.5 5L5 1.5L8.5 5M1.5 10L5 13.5L8.5 10" fill="none" stroke="#666" stroke-width="1"/></svg></div>
<div class="abs" style="left:1822px;top:445px;width:79px;height:24px;background:#ebebfc;border:1px solid #cfd1f2;border-radius:3px;overflow:hidden"><span class="abs" style="left:18px;top:1px;font-size:15px;line-height:20px;color:#444;white-space:nowrap">0.00</span><div class="abs" style="right:0;top:0;width:16px;height:22px;background:#ebebfc"></div><svg class="abs" style="right:3px;top:4px" width="10" height="15" viewBox="0 0 10 15"><path d="M1.5 5L5 1.5L8.5 5M1.5 10L5 13.5L8.5 10" fill="none" stroke="#666" stroke-width="1"/></svg></div>

<div id="status" class="abs">
<div class="abs" style="left:0;top:0;width:43px;height:27px;background:#1162b5"></div>
<svg style="left:15px;top:5px" width="13" height="16" viewBox="0 0 13 16"><path d="M1 14L6 9.5L1.5 5.5M12 1.5L7 6L11.5 10" fill="none" stroke="#fff" stroke-width="1.3"/></svg>
<svg style="left:53px;top:5px" width="17" height="17" viewBox="0 0 17 17"><circle cx="8.5" cy="8.5" r="7.3" fill="none" stroke="#fff" stroke-width="1.2"/><path d="M5.5 5.5L11.5 11.5M11.5 5.5L5.5 11.5" stroke="#fff" stroke-width="1.2"/></svg>
<span class="abs" style="left:74px;top:5px;font-size:15px;line-height:18px;color:#fff">0</span>
<svg style="left:87px;top:5px" width="17" height="17" viewBox="0 0 17 17"><path d="M8.5 1.5L15.8 15H1.2Z" fill="none" stroke="#fff" stroke-width="1.2" stroke-linejoin="round"/><path d="M8.5 6V11M8.5 12.3V13.5" stroke="#fff" stroke-width="1.2"/></svg>
<span class="abs" style="left:108px;top:5px;font-size:15px;line-height:18px;color:#fff">0</span>
<svg style="left:1885px;top:4px" width="16" height="18" viewBox="0 0 16 18"><path d="M2 14.5C3 13 3 12 3 9V7.5A5 5 0 0 1 13 7.5V9C13 12 13 13 14 14.5Z" fill="none" stroke="#fff" stroke-width="1.2" stroke-linejoin="round"/><path d="M6.8 15.8A1.4 1.4 0 0 0 9.2 15.8" fill="none" stroke="#fff" stroke-width="1.1"/></svg>
</div>
</body></html>
